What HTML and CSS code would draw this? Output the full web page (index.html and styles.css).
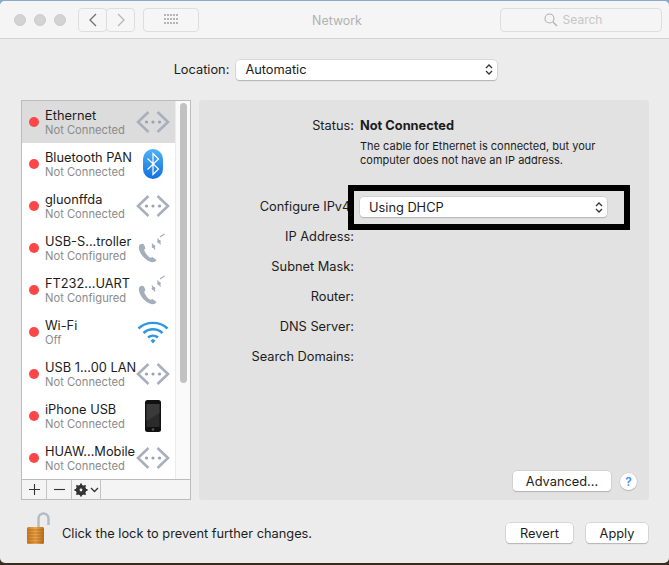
FILE: index.html
```html
<!DOCTYPE html>
<html>
  <head>
    <meta charset="utf-8">
    <title>Network</title>
    <link rel="stylesheet" href="styles.css">
  </head>
  <body>
    <svg class="defs" width="0" height="0">
      <symbol id="ico-ethernet" viewBox="0 0 34 24">
        <path d="M12.500 2 2 12l10.500 10M21.500 2 32 12 21.500 22" fill="none" stroke="#a8b0bc" stroke-width="2.600"/>
        <circle cx="10.500" cy="12" r="1.600" fill="#98a2b0"/>
        <circle cx="17" cy="12" r="1.600" fill="#98a2b0"/>
        <circle cx="23.500" cy="12" r="1.600" fill="#98a2b0"/>
      </symbol>
      <symbol id="ico-phone" viewBox="0 0 30 30">
        <path d="M2 11.500C1 12 .5 14 1 16c1.500 6 6 11 12 13 2 .5 4.500 0 5.500-2l-4-3c-1.500 1-2.500 1-3.500 0-2-1.500-3.500-4-4.500-6-.5-1.500 0-2 1-2.500L6 11.500c-1-1-3-1-4 0Z" fill="#a5aebb"/>
        <path d="m14 10.500 3 6M19.500 5.500l3 6M22 4l4.500-3" fill="none" stroke="#a5aebb" stroke-width="1.200"/>
        <circle cx="15.500" cy="13.500" r="1.800" fill="#a5aebb"/>
        <circle cx="21" cy="8.500" r="1.800" fill="#a5aebb"/>
      </symbol>
    </svg>

    <div class="window">
      <header class="titlebar">
        <div class="lights"><i></i><i></i><i></i></div>
        <div class="nav">
          <span class="tb-btn nav-back">
            <svg width="10" height="14" viewBox="0 0 10 14"><path d="M8 1 2 7l6 6" fill="none" stroke="#6f6f6f" stroke-width="1.300"/></svg>
          </span>
          <span class="tb-btn nav-fwd">
            <svg width="10" height="14" viewBox="0 0 10 14"><path d="m2 1 6 6-6 6" fill="none" stroke="#b5b5b5" stroke-width="1.300"/></svg>
          </span>
        </div>
        <span class="tb-btn grid-btn">
          <svg width="15" height="11" viewBox="0 0 15 11" fill="#b4b4b4">
            <rect x="0" y="0" width="2" height="2"/><rect x="3" y="0" width="2" height="2"/><rect x="6" y="0" width="2" height="2"/><rect x="9" y="0" width="2" height="2"/><rect x="12" y="0" width="2" height="2"/>
            <rect x="0" y="4" width="2" height="2"/><rect x="3" y="4" width="2" height="2"/><rect x="6" y="4" width="2" height="2"/><rect x="9" y="4" width="2" height="2"/><rect x="12" y="4" width="2" height="2"/>
            <rect x="0" y="8" width="2" height="2"/><rect x="3" y="8" width="2" height="2"/><rect x="6" y="8" width="2" height="2"/><rect x="9" y="8" width="2" height="2"/><rect x="12" y="8" width="2" height="2"/>
          </svg>
        </span>
        <div class="title">Network</div>
        <div class="search">
          <svg width="14" height="14" viewBox="0 0 14 14"><circle cx="5.500" cy="5.500" r="4.500" fill="none" stroke="#b0b0b0" stroke-width="1.100"/><path d="m9 9 4 4" stroke="#b0b0b0" stroke-width="1.200"/></svg>
          <span>Search</span>
        </div>
      </header>

      <div class="location">
        <span>Location:</span>
        <div class="select location-select">
          <span>Automatic</span>
          <svg class="updown" width="8" height="13" viewBox="0 0 8 13"><path d="m1 5 3-3 3 3M1 8l3 3 3-3" fill="none" stroke="#333" stroke-width="1.300"/></svg>
        </div>
      </div>

      <main class="content">
        <div class="sidebar">
          <div class="list-wrap">
            <ul class="list">
              <li class="row selected">
                <i class="dot"></i>
                <div class="row-text"><b>Ethernet</b><small>Not Connected</small></div>
                <svg class="row-icon" width="34" height="24"><use href="#ico-ethernet"/></svg>
              </li>
              <li class="row">
                <i class="dot"></i>
                <div class="row-text"><b>Bluetooth PAN</b><small>Not Connected</small></div>
                <svg class="row-icon" width="34" height="32" viewBox="0 0 34 32">
                  <defs><linearGradient id="bt" x1="0" y1="0" x2="0" y2="1"><stop offset="0" stop-color="#4fb2f7"/><stop offset="1" stop-color="#1270dc"/></linearGradient></defs>
                  <rect x="7" y="1" width="20" height="30" rx="10" fill="url(#bt)"/>
                  <path d="m11.500 10.500 11 10.500-5.500 5.500V5.500l5.500 5.500-11 10.500" fill="none" stroke="#fff" stroke-width="1.200"/>
                </svg>
              </li>
              <li class="row">
                <i class="dot"></i>
                <div class="row-text"><b>gluonffda</b><small>Not Connected</small></div>
                <svg class="row-icon" width="34" height="24"><use href="#ico-ethernet"/></svg>
              </li>
              <li class="row">
                <i class="dot"></i>
                <div class="row-text"><b>USB-S...troller</b><small>Not Configured</small></div>
                <svg class="row-icon phone-icon" width="30" height="30"><use href="#ico-phone"/></svg>
              </li>
              <li class="row">
                <i class="dot"></i>
                <div class="row-text"><b>FT232...UART</b><small>Not Configured</small></div>
                <svg class="row-icon phone-icon" width="30" height="30"><use href="#ico-phone"/></svg>
              </li>
              <li class="row">
                <i class="dot"></i>
                <div class="row-text"><b>Wi-Fi</b><small>Off</small></div>
                <svg class="row-icon" width="34" height="26" viewBox="0 0 34 26">
                  <g fill="none" stroke="#2c97e8" stroke-width="2.400">
                    <path d="M2.500 9.500c8-7.500 21-7.500 29 0"/>
                    <path d="M7.500 14c5.500-5 13.500-5 19 0"/>
                    <path d="M12 18.500c3-2.500 7-2.500 10 0"/>
                  </g>
                  <path d="m14.500 21.500 2.500-1.500 2.500 1.500L17 24.500Z" fill="#2c97e8"/>
                </svg>
              </li>
              <li class="row">
                <i class="dot"></i>
                <div class="row-text"><b>USB 1...00 LAN</b><small>Not Connected</small></div>
                <svg class="row-icon" width="34" height="24"><use href="#ico-ethernet"/></svg>
              </li>
              <li class="row">
                <i class="dot"></i>
                <div class="row-text"><b>iPhone USB</b><small>Not Connected</small></div>
                <svg class="row-icon" width="34" height="34" viewBox="0 0 34 34">
                  <rect x="9" y="1" width="16" height="32" rx="2.500" fill="#111"/>
                  <rect x="10.500" y="5" width="13" height="23" fill="#2b2b2b"/>
                  <path d="M10.500 5h13v9l-13 8Z" fill="#3a3a3a"/>
                  <circle cx="17" cy="30.500" r="1.300" fill="#555"/>
                </svg>
              </li>
              <li class="row">
                <i class="dot"></i>
                <div class="row-text"><b>HUAW...Mobile</b><small>Not Connected</small></div>
                <svg class="row-icon" width="34" height="24"><use href="#ico-ethernet"/></svg>
              </li>
            </ul>
            <div class="scrollbar"><div class="thumb"></div></div>
          </div>
          <div class="list-tools">
            <span class="tool tool-add">
              <svg width="13" height="13" viewBox="0 0 13 13"><path d="M6.500 1v11M1 6.500h11" stroke="#333" stroke-width="1.100"/></svg>
            </span>
            <span class="tool tool-remove">
              <svg width="13" height="13" viewBox="0 0 13 13"><path d="M1 6.500h11" stroke="#333" stroke-width="1.100"/></svg>
            </span>
            <span class="tool tool-gear">
              <svg width="25" height="14" viewBox="0 0 25 14">
                <circle cx="7" cy="7" r="3.800" fill="none" stroke="#333" stroke-width="2.800"/>
                <path d="M7 .5v13M.5 7h13M2.400 2.400l9.200 9.200M11.600 2.400l-9.200 9.200" stroke="#333" stroke-width="1.800"/>
                <circle cx="7" cy="7" r="1.400" fill="#f4f4f4"/>
                <path d="m17 5 3.500 3.500L24 5" fill="none" stroke="#333" stroke-width="1.300"/>
              </svg>
            </span>
          </div>
        </div>

        <section class="panel">
          <div class="form">
            <div class="label">Status:</div>
            <div class="status">
              <strong>Not Connected</strong>
              <p>The cable for Ethernet is connected, but your computer does not have an IP address.</p>
            </div>
            <div class="label">Configure IPv4:</div>
            <div class="select dhcp-select">
              <span>Using DHCP</span>
              <svg class="updown" width="8" height="13" viewBox="0 0 8 13"><path d="m1 5 3-3 3 3M1 8l3 3 3-3" fill="none" stroke="#333" stroke-width="1.300"/></svg>
            </div>
            <div class="label">IP Address:</div><div></div>
            <div class="label">Subnet Mask:</div><div></div>
            <div class="label">Router:</div><div></div>
            <div class="label">DNS Server:</div><div></div>
            <div class="label">Search Domains:</div><div></div>
          </div>
          <div class="highlight"></div>
          <div class="panel-foot">
            <span class="btn advanced">Advanced...</span>
            <span class="help">?</span>
          </div>
        </section>
      </main>

      <footer class="footer">
        <svg class="lock" width="26" height="34" viewBox="0 0 26 34">
          <defs><linearGradient id="brass" x1="0" y1="0" x2="1" y2="0"><stop offset="0" stop-color="#c97a22"/><stop offset=".5" stop-color="#eda84a"/><stop offset="1" stop-color="#b96c1c"/></linearGradient></defs>
          <path d="M13.500 16V6.500a5 5 0 0 1 10 0V13" fill="none" stroke="#b4bcc4" stroke-width="2.500"/>
          <rect x="2" y="15" width="17" height="17" rx="1.500" fill="url(#brass)"/>
          <path d="M2 18h17M2 21h17M2 24h17M2 27h17M2 30h17" stroke="#a8641c" stroke-width=".7"/>
        </svg>
        <span class="lock-text">Click the lock to prevent further changes.</span>
        <span class="btn revert">Revert</span>
        <span class="btn apply">Apply</span>
      </footer>
    </div>
  </body>
</html>
```

FILE: styles.css
```css
* {
  box-sizing: border-box;
}
html,
body {
  height: 100%;
}
body {
  margin: 0;
  overflow: hidden;
  background: linear-gradient(#8ba8c6 0 50%, #3a2d20 50%);
  font-family: "Inter", "Liberation Sans", sans-serif;
  font-size: 12.8px;
  color: #1c1c1c;
}
.defs {
  display: block;
  height: 0;
}
.window {
  height: 562px;
  margin-top: 1px;
  display: flex;
  flex-direction: column;
  background: #ececec;
  border-radius: 5px;
  overflow: hidden;
}

/* title bar */
.titlebar {
  height: 38px;
  flex: none;
  display: flex;
  align-items: center;
  padding: 0 7px 0 14px;
  background: #f5f5f5;
  border-bottom: 1px solid #d2d2d2;
}
.lights {
  display: flex;
  gap: 8px;
  width: 64px;
}
.lights i {
  width: 12px;
  height: 12px;
  border-radius: 50%;
  background: #d3d3d3;
  border: 1px solid #cbcbcb;
}
.nav {
  display: flex;
  margin-right: 8px;
}
.tb-btn {
  height: 24px;
  display: flex;
  align-items: center;
  justify-content: center;
  border: 1px solid #dedede;
  border-radius: 4px;
  background: #f6f6f6;
}
.nav-back {
  width: 29px;
}
.nav-fwd {
  width: 29px;
  margin-left: -1px;
}
.grid-btn {
  width: 56px;
}
.title {
  flex: 1;
  margin-top: 2px;
  padding-right: 25px;
  text-align: center;
  font-size: 12.4px;
  color: #b1b1b1;
}
.search {
  width: 162px;
  height: 24px;
  display: flex;
  align-items: center;
  justify-content: center;
  gap: 5px;
  padding-right: 16px;
  border: 1px solid #dedede;
  border-radius: 4px;
  font-size: 12px;
  color: #c6c6c6;
}

/* location */
.location {
  height: 61px;
  flex: none;
  display: flex;
  align-items: center;
  justify-content: center;
  gap: 7px;
  padding-left: 2px;
}
.select {
  height: 20px;
  display: flex;
  align-items: center;
  justify-content: space-between;
  padding: 0 4px 0 9px;
  background: #fff;
  border-radius: 4px;
  box-shadow: 0 0 0 .5px #c4c4c4, 0 1px 1px #a9a9a9;
}
.location-select {
  width: 261px;
}

/* main */
.content {
  height: 400px;
  flex: none;
  display: flex;
  gap: 8px;
  padding-left: 21px;
  padding-right: 20px;
}
.sidebar {
  width: 170px;
  display: flex;
  flex-direction: column;
  border: 1px solid #bcbcbc;
  background: #fff;
}
.list-wrap {
  height: 378px;
  display: flex;
}
.list {
  flex: 1;
  min-width: 0;
  margin: 0;
  padding: 0;
  list-style: none;
}
.row {
  height: 42px;
  display: flex;
  align-items: center;
  padding-left: 7px;
}
.row.selected {
  background: #dcdcdc;
}
.dot {
  width: 10px;
  height: 10px;
  flex: none;
  border-radius: 50%;
  background: #fb4748;
}
.row-text {
  flex: 1;
  min-width: 0;
  margin-left: 6px;
  padding-top: 2px;
  display: flex;
  flex-direction: column;
  white-space: nowrap;
}
.row-text b {
  font-weight: 400;
  font-size: 12.8px;
  line-height: 15px;
}
.row-text small {
  font-size: 11.2px;
  line-height: 15px;
  color: #8b8b8b;
}
.row-icon {
  flex: none;
  margin-right: 5px;
}
.phone-icon {
  margin-right: 7px;
}
.scrollbar {
  width: 15px;
  flex: none;
  padding: 2px 3px 0 4px;
  background: #fafafa;
  border-left: 1px solid #ececec;
}
.thumb {
  height: 280px;
  border-radius: 4px;
  background: #c2c2c2;
}
.list-tools {
  flex: 1;
  display: flex;
  background: #f4f4f4;
  border-top: 1px solid #bcbcbc;
}
.tool {
  display: flex;
  align-items: center;
  justify-content: center;
  border-right: 1px solid #c4c4c4;
}
.tool-add,
.tool-remove {
  width: 25px;
}
.tool-gear {
  width: 29px;
}

/* right panel */
.panel {
  position: relative;
  flex: 1;
  display: flex;
  flex-direction: column;
  background: #e2e2e2;
  border-radius: 4px;
}
.form {
  flex: 1;
  display: grid;
  grid-template-columns: 155px 247px;
  grid-template-rows: 81px;
  grid-auto-rows: 30px;
  column-gap: 6px;
  padding-top: 16px;
}
.label {
  text-align: right;
  line-height: 20px;
  white-space: nowrap;
}
.status strong {
  display: block;
  line-height: 20px;
  font-weight: 700;
}
.status p {
  margin: 3px 0 0;
  font-size: 11px;
  line-height: 14px;
}
.highlight {
  position: absolute;
  left: 149px;
  top: 85px;
  width: 282px;
  height: 45px;
  border: 6px solid #000;
}
.panel-foot {
  flex: none;
  display: flex;
  align-items: center;
  justify-content: flex-end;
  gap: 9px;
  padding: 0 12px 9px 0;
}
.btn {
  height: 20px;
  display: flex;
  align-items: center;
  justify-content: center;
  background: #fff;
  border-radius: 4px;
  box-shadow: 0 0 0 .5px #c4c4c4, 0 1px 1px #a9a9a9;
}
.advanced {
  width: 98px;
}
.help {
  width: 17px;
  height: 17px;
  display: flex;
  align-items: center;
  justify-content: center;
  border-radius: 50%;
  background: #fff;
  box-shadow: 0 0 0 .5px #c4c4c4, 0 1px 1px #b0b0b0;
  color: #3d8ff5;
  font-weight: 600;
  font-size: 12px;
}

/* footer */
.footer {
  flex: 1;
  display: flex;
  align-items: center;
  padding: 3px 21px 0 25px;
}
.lock {
  flex: none;
  margin-bottom: 9px;
}
.lock-text {
  flex: 1;
  margin-left: 11px;
}
.revert {
  width: 67px;
  margin-right: 13px;
}
.apply {
  width: 62px;
}
```
